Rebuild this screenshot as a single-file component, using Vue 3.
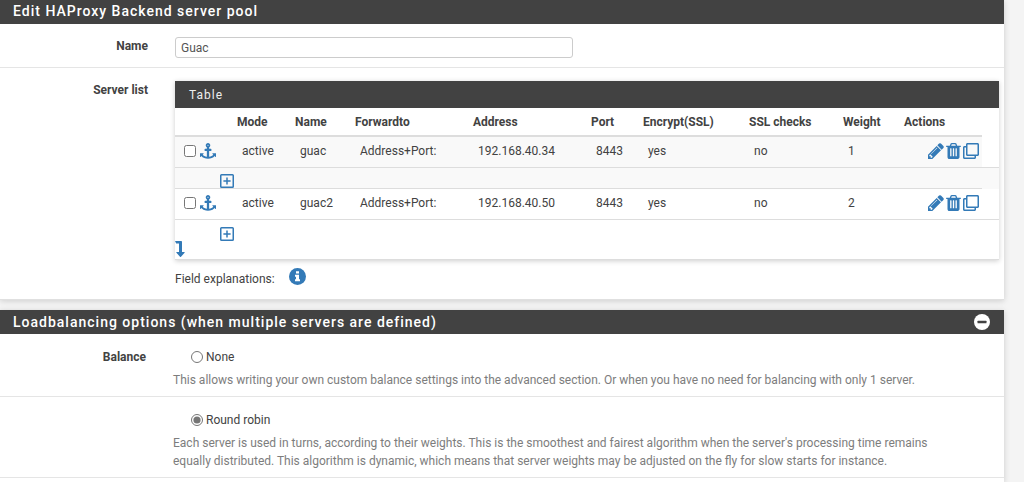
<script setup>
import { ref } from 'vue'

const poolName = ref('Guac')
const balance = ref('roundrobin')
const servers = [
  { name: 'guac', address: '192.168.40.34', port: '8443', ssl: 'yes', checks: 'no', weight: '1' },
  { name: 'guac2', address: '192.168.40.50', port: '8443', ssl: 'yes', checks: 'no', weight: '2' }
]
const headers = ['Mode', 'Name', 'Forwardto', 'Address', 'Port', 'Encrypt(SSL)', 'SSL checks', 'Weight', 'Actions']
const icons = {
  anchor: 'M960 256q0-26-19-45t-45-19-45 19-19 45 19 45 45 19 45-19 19-45zm832 928v352q0 22-20 30-8 2-12 2-12 0-23-9l-93-93q-119 143-318.5 226.5t-429.5 83.5-429.5-83.5-318.5-226.5l-93 93q-9 9-23 9-4 0-12-2-20-8-20-30v-352q0-14 9-23t23-9h352q22 0 30 20 8 19-7 35l-100 100q67 91 189.5 153.5t271.5 82.5v-647h-192q-26 0-45-19t-19-45v-128q0-26 19-45t45-19h192v-163q-58-34-93-92.5t-35-128.5q0-106 75-181t181-75 181 75 75 181q0 70-35 128.5t-93 92.5v163h192q26 0 45 19t19 45v128q0 26-19 45t-45 19h-192v647q149-20 271.5-82.5t189.5-153.5l-100-100q-15-16-7-35 8-20 30-20h352q14 0 23 9t9 23z',
  pencil: 'M491 1536l91-91-235-235-91 91v107h128v128h107zm523-928q0-22-22-22-10 0-17 7l-542 542q-7 7-7 17 0 22 22 22 10 0 17-7l542-542q7-7 7-17zm-54-192l416 416-832 832h-416v-416zm683 96q0 53-37 90l-166 166-416-416 166-165q36-38 90-38 53 0 91 38l235 234q37 39 37 91z',
  trash: 'M704 1376v-704q0-14-9-23t-23-9h-64q-14 0-23 9t-9 23v704q0 14 9 23t23 9h64q14 0 23-9t9-23zm256 0v-704q0-14-9-23t-23-9h-64q-14 0-23 9t-9 23v704q0 14 9 23t23 9h64q14 0 23-9t9-23zm256 0v-704q0-14-9-23t-23-9h-64q-14 0-23 9t-9 23v704q0 14 9 23t23 9h64q14 0 23-9t9-23zm-544-992h448l-48-117q-7-9-17-11h-317q-10 2-17 11zm928 32v64q0 14-9 23t-23 9h-96v948q0 83-47 143.5t-113 60.5h-832q-66 0-113-58.5t-47-141.5v-952h-96q-14 0-23-9t-9-23v-64q0-14 9-23t23-9h309l70-167q15-37 54-63t79-26h320q40 0 79 26t54 63l70 167h309q14 0 23 9t9 23z',
  clone: 'M464 0H144c-26.51 0-48 21.49-48 48v48H48c-26.51 0-48 21.49-48 48v320c0 26.51 21.49 48 48 48h320c26.51 0 48-21.49 48-48v-48h48c26.51 0 48-21.49 48-48V48c0-26.51-21.49-48-48-48zM362 464H54a6 6 0 0 1-6-6V150a6 6 0 0 1 6-6h42v224c0 26.51 21.49 48 48 48h224v42a6 6 0 0 1-6 6zm96-96H150a6 6 0 0 1-6-6V54a6 6 0 0 1 6-6h308a6 6 0 0 1 6 6v308a6 6 0 0 1-6 6z'
}
</script>

<template>
  <main class="page">
    <section class="panel">
      <h2 class="panel-head">Edit HAProxy Backend server pool</h2>
      <div class="row name-row">
        <label class="row-label" for="pool-name">Name</label>
        <div><input id="pool-name" v-model="poolName" class="text-input" type="text"></div>
      </div>
      <div class="row list-row">
        <span class="row-label">Server list</span>
        <div class="list-body">
          <div class="subpanel">
            <h3 class="sub-head">Table</h3>
            <table class="servers">
              <colgroup>
                <col class="c-check"><col class="c-mode"><col class="c-name"><col class="c-forward"><col class="c-address"><col class="c-port"><col class="c-ssl"><col class="c-checks"><col class="c-weight"><col class="c-actions"><col class="c-rest">
              </colgroup>
              <thead>
                <tr>
                  <th></th>
                  <th v-for="h in headers" :key="h">{{ h }}</th>
                </tr>
              </thead>
              <tbody>
                <template v-for="(s, i) in servers" :key="s.name">
                  <tr class="server" :class="{ striped: i === 0 }">
                    <td>
                      <div class="tools">
                        <input type="checkbox" :aria-label="'Select ' + s.name">
                        <button type="button" :aria-label="'Move ' + s.name">
                          <svg class="anchor" viewBox="0 0 1792 1792"><path :d="icons.anchor" /></svg>
                        </button>
                      </div>
                    </td>
                    <td>active</td>
                    <td>{{ s.name }}</td>
                    <td>Address+Port:</td>
                    <td>{{ s.address }}</td>
                    <td>{{ s.port }}</td>
                    <td>{{ s.ssl }}</td>
                    <td>{{ s.checks }}</td>
                    <td>{{ s.weight }}</td>
                    <td class="actions">
                      <div class="tools end">
                        <button type="button" aria-label="Edit"><svg class="pencil" viewBox="128 128 1536 1536"><path :d="icons.pencil" /></svg></button>
                        <button type="button" aria-label="Delete"><svg class="trash" viewBox="192 128 1408 1536"><path :d="icons.trash" /></svg></button>
                        <button type="button" aria-label="Copy"><svg class="clone" viewBox="0 0 512 512"><path :d="icons.clone" /></svg></button>
                      </div>
                    </td>
                    <td class="rest"></td>
                  </tr>
                  <tr class="detail" :class="{ striped: i === 0 }">
                    <td colspan="10">
                      <button type="button" :aria-label="'Expand ' + s.name">
                        <svg class="plus" viewBox="0 0 14 14"><rect x="0.75" y="0.75" width="12.5" height="12.5" rx="0.8" /><path d="M7 3.4v7.2M3.4 7h7.2" /></svg>
                      </button>
                    </td>
                    <td class="rest"></td>
                  </tr>
                </template>
              </tbody>
            </table>
            <button class="add" type="button" aria-label="Add server">
              <svg viewBox="0 0 10 16"><path d="M0 0h6.2q.8 0 .8.8V11h2.2q.8 0 .4.8L6 15.7q-.5.5-1 0L1.400 11.800q-.4-.8.4-.8H4V2.500H1.200z" /></svg>
            </button>
          </div>
          <div class="explain">
            <span>Field explanations:</span>
            <button type="button" aria-label="Show field explanations">
              <svg class="info" viewBox="0 0 17 17"><circle cx="8.500" cy="8.500" r="8.500" /><path fill="#fff" d="M7 3.300h3v2.200H7zM6 6.700h4v4.600h1v2H6v-2h1V8.700H6z" /></svg>
            </button>
          </div>
        </div>
      </div>
    </section>

    <section class="panel">
      <h2 class="panel-head">
        <span>Loadbalancing options (when multiple servers are defined)</span>
        <button type="button" aria-label="Collapse">
          <svg class="minus" viewBox="0 0 16 16"><circle cx="8" cy="8" r="8" /><rect x="3.500" y="6.800" width="9" height="2.400" rx="0.500" /></svg>
        </button>
      </h2>
      <div class="row option-row">
        <span class="row-label">Balance</span>
        <div>
          <label class="radio"><input v-model="balance" type="radio" name="balance" value="none">None</label>
          <p>This allows writing your own custom balance settings into the advanced section. Or when you have no need for balancing with only 1 server.</p>
        </div>
      </div>
      <div class="row option-row">
        <span></span>
        <div>
          <label class="radio"><input v-model="balance" type="radio" name="balance" value="roundrobin">Round robin</label>
          <p>Each server is used in turns, according to their weights. This is the smoothest and fairest algorithm when the server's processing time remains equally distributed. This algorithm is dynamic, which means that server weights may be adjusted on the fly for slow starts for instance.</p>
        </div>
      </div>
    </section>
  </main>
</template>

<style>
body {
  background: #f4f4f4;
}
</style>

<style scoped>
.page {
  padding-right: 20px;
  font: 12px/18px Roboto, "Liberation Sans", sans-serif;
  color: #424242;
}
.page * { box-sizing: border-box; }
button {
  display: block;
  padding: 0;
  border: 0;
  background: none;
  color: #337ab7;
  cursor: pointer;
}
svg { display: block; fill: currentColor; }
.panel {
  background: #fff;
  border-bottom: 1px solid #e0e0e0;
  box-shadow: 0 1px 6px rgba(0, 0, 0, 0.16);
}
.panel + .panel {
  margin-top: 10px;
  padding-bottom: 5px;
  border-bottom: 0;
}
.panel-head {
  display: flex;
  align-items: center;
  justify-content: space-between;
  height: 24px;
  margin: 0;
  padding: 0 14px 2px 13px;
  background: #424242;
  color: #fff;
  font-size: 14px;
  font-weight: 500;
  letter-spacing: 1px;
}
.panel + .panel .panel-head { padding-bottom: 0; }
.panel-head button { color: #fff; }
.row {
  display: grid;
  grid-template-columns: 148px minmax(0, 1fr);
  column-gap: 27px;
  border-bottom: 1px solid #e5e5e5;
}
.row-label { text-align: right; font-weight: 700; }
.name-row { padding: 13px 0 9px; }
.text-input {
  display: block;
  width: 48%;
  height: 21px;
  padding: 0 5px;
  border: 1px solid #ccc;
  border-radius: 3px;
  color: #555;
  font: inherit;
  outline: 0;
}
.list-row { padding: 13px 0 11px; border-bottom: 0; }
.list-body { padding-right: 5px; }
.subpanel {
  padding-bottom: 2px;
  background: #fff;
  border-bottom: 1px solid #ddd;
  box-shadow: 0 1px 5px rgba(0, 0, 0, 0.2);
}
.sub-head {
  margin: 0;
  padding: 5px 14px 4px;
  background: #424242;
  color: #eee;
  font-size: 12px;
  font-weight: 400;
  letter-spacing: 1px;
}
.servers {
  width: 100%;
  table-layout: fixed;
  border-collapse: separate;
  border-spacing: 0;
}
.c-check { width: 58px; }
.c-mode { width: 58px; }
.c-name { width: 60px; }
.c-forward { width: 118px; }
.c-address { width: 118px; }
.c-port { width: 52px; }
.c-ssl { width: 106px; }
.c-checks { width: 94px; }
.c-weight { width: 61px; }
.c-actions { width: 82px; }
.c-rest { width: 17px; }
th {
  height: 29px;
  padding: 0 4px;
  border-bottom: 2px solid #ddd;
  text-align: left;
  font-weight: 700;
  white-space: nowrap;
}
td { padding: 0 9px; white-space: nowrap; }
.server td {
  height: 31px;
  padding-bottom: 2px;
  border-bottom: 1px solid #ddd;
}
.striped td { background: #f9f9f9; }
.server td.rest { padding: 0; background: #fff; }
.server td.actions { padding-right: 3px; }
.tools { display: flex; align-items: center; gap: 4px; }
.tools input { width: 12px; height: 12px; margin: 0; }
.end { justify-content: flex-end; gap: 2px; }
.detail td { height: 21px; padding: 6px 45px 0; }
.detail td.rest { padding: 0; }
.detail.striped td { border-bottom: 1px solid #ddd; }
.detail.striped td.rest { border-bottom-color: #f9f9f9; }
.anchor, .pencil, .clone { width: 16px; height: 16px; }
.trash { width: 15px; height: 16px; }
.plus { width: 14px; height: 14px; fill: none; stroke: currentColor; stroke-width: 1.5; }
.add svg { width: 10px; height: 16px; }
.explain {
  display: flex;
  align-items: flex-start;
  gap: 14px;
  padding-top: 8px;
}
.explain span { padding-top: 2px; }
.info { width: 17px; height: 17px; }
.minus { width: 16px; height: 16px; }
.minus rect { fill: #424242; }
.option-row {
  grid-template-columns: 146px minmax(0, 1fr);
  padding: 14px 44px 7px 0;
}
.radio { display: flex; align-items: center; gap: 3px; padding-left: 18px; }
.radio input { width: 12px; height: 12px; margin: 0; accent-color: #757575; }
.option-row p { margin: 5px 0 0; color: #7d7d7d; }
</style>
